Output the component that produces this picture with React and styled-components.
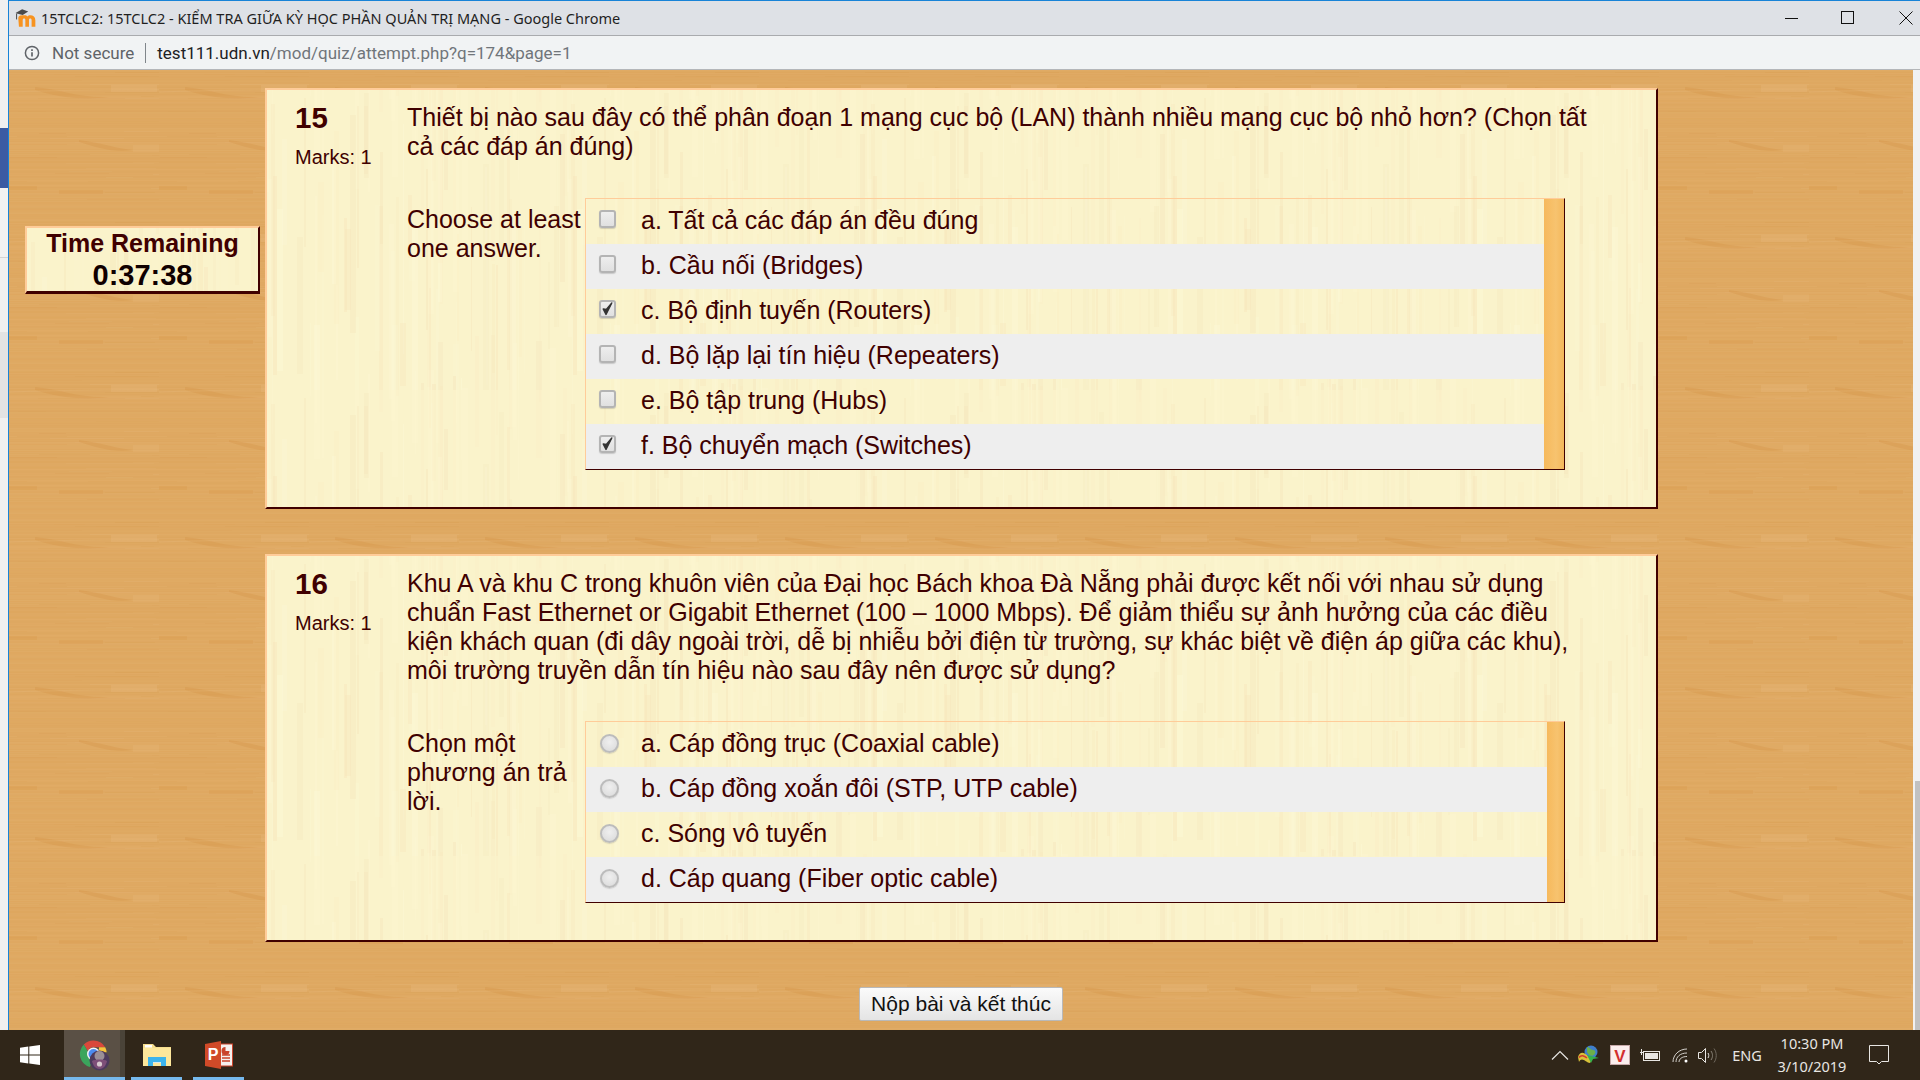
import React from "react";
import styled, { createGlobalStyle } from "styled-components";

function rng(seed) {
  let s = seed;
  return () => {
    s = (s * 9301 + 49297) % 233280;
    return s / 233280;
  };
}

function woodTile() {
  const r = rng(17);
  let out = `<rect width="150" height="150" fill="#dfa962"/>`;
  for (let y = 0; y < 150; y += 1) {
    const o = r() * 0.1;
    const light = r() > 0.5;
    out += `<rect x="0" y="${y}" width="150" height="1" fill="${light ? "#e9c088" : "#d39444"}" opacity="${o.toFixed(3)}"/>`;
  }
  for (let i = 0; i < 34; i += 1) {
    const x = Math.floor(r() * 150);
    const y = Math.floor(r() * 150);
    const w = 25 + Math.floor(r() * 70);
    const light = r() > 0.5;
    out += `<rect x="${x}" y="${y}" width="${w}" height="1" fill="${light ? "#e9c088" : "#d39444"}" opacity="${(0.06 + r() * 0.1).toFixed(3)}"/>`;
  }
  out += `<rect x="0" y="116" width="28" height="4" fill="#d4923f" opacity=".22"/>`;
  out += `<rect x="50" y="120" width="44" height="4" fill="#d4923f" opacity=".22"/>`;
  out += `<path d="M26 17 C50 19 70 28 100 27 C70 31 45 26 26 20Z" fill="#d39444" opacity=".32"/>`;
  out += `<rect x="102" y="15" width="46" height="7" fill="#e8bb80" opacity=".28"/>`;
  out += `<path d="M0 22 C30 21 110 19 150 20" stroke="#e8bb80" stroke-width="1" fill="none" opacity=".25"/>`;
  out += `<path d="M70 70 C90 72 105 78 124 80 C104 83 90 78 70 72Z" fill="#d39444" opacity=".32"/>`;
  out += `<rect x="124" y="75" width="26" height="7" fill="#e8bb80" opacity=".22"/>`;
  return `url("data:image/svg+xml,${encodeURIComponent(`<svg xmlns="http://www.w3.org/2000/svg" width="150" height="150">${out}</svg>`)}")`;
}

function paperTile() {
  const r = rng(53);
  let out = `<rect width="300" height="300" fill="#faf3cb"/>`;
  for (let i = 0; i < 80; i += 1) {
    const x = Math.floor(r() * 300);
    const y = Math.floor(r() * 300);
    const w = 1 + Math.floor(r() * 6);
    const h = 60 + Math.floor(r() * 190);
    const tone = r() > 0.5 ? "#f5e3b8" : "#fcf8d8";
    out += `<rect x="${x}" y="${y}" width="${w}" height="${h}" fill="${tone}" opacity="${(0.15 + r() * 0.25).toFixed(2)}"/>`;
    out += `<rect x="${x}" y="${y - 300}" width="${w}" height="${h}" fill="${tone}" opacity="0.15"/>`;
  }
  return `url("data:image/svg+xml,${encodeURIComponent(`<svg xmlns="http://www.w3.org/2000/svg" width="300" height="300">${out}</svg>`)}")`;
}

const WOOD = woodTile();
const PAPER = paperTile();

const Global = createGlobalStyle`
  html, body { margin: 0; padding: 0; height: 100%; overflow: hidden; }
  body { font-family: "Liberation Sans", Arial, sans-serif; background: #302619; }
  #root { width: 1920px; height: 1080px; }
`;

const Desktop = styled.div`
  width: 1920px;
  height: 1080px;
  display: flex;
  flex-direction: column;
`;
const Screen = styled.div`
  flex: 1;
  min-height: 0;
  display: flex;
`;
const BackWindow = styled.div`
  width: 8px;
  display: flex;
  flex-direction: column;
  background: #f0f0f0;
`;
const BackBand = styled.div`
  height: ${(p) => p.$h}px;
  background: ${(p) => p.$c};
  border-bottom: ${(p) => (p.$line ? "1px solid #d4d4d4" : "none")};
  box-sizing: border-box;
`;
const Browser = styled.div`
  flex: 1;
  min-width: 0;
  display: flex;
  flex-direction: column;
  border-left: 1px solid #1883d7;
  border-top: 1px solid #1883d7;
`;
const TitleBar = styled.div`
  height: 34px;
  background: #dee1e6;
  border-bottom: 1px solid #a9abae;
  display: flex;
  align-items: center;
  padding-left: 6px;
  color: #1f1f1f;
  font-family: "Noto Sans", sans-serif;
  font-size: 14.5px;
`;
const TitleText = styled.span`
  flex: 1;
  margin-left: 4px;
  white-space: nowrap;
`;
const WinButton = styled.span`
  width: ${(p) => p.$w}px;
  display: flex;
  justify-content: flex-start;
  align-items: center;
`;
const WinControls = styled.div`
  display: flex;
  width: 135px;
`;
const AddressBar = styled.div`
  height: 33px;
  background: #f1f3f4;
  border-bottom: 1px solid #b4b6b9;
  display: flex;
  align-items: center;
  padding-left: 15px;
  font-family: Roboto, sans-serif;
  font-size: 17px;
  white-space: nowrap;
`;
const NotSecure = styled.span`
  margin-left: 12px;
  color: #5f6368;
`;
const Separator = styled.span`
  width: 1px;
  height: 20px;
  background: #80868b;
  margin: 0 11px;
`;
const UrlHost = styled.span`
  color: #202124;
`;
const UrlPath = styled.span`
  color: #70757a;
`;
const Viewport = styled.div`
  flex: 1;
  min-height: 0;
  display: flex;
`;
const Wood = styled.main`
  flex: 1;
  min-width: 0;
  background-color: #dfa962;
  background-image: ${WOOD};
  padding-top: 18px;
  display: grid;
  grid-template-columns: 256px 1393px 1fr;
  grid-template-rows: auto auto;
  align-content: start;
  color: #400000;
`;
const Scrollbar = styled.div`
  width: 7px;
  background: #f1f1f1;
  display: flex;
  flex-direction: column;
  align-items: flex-end;
  justify-content: flex-end;
`;
const ScrollThumb = styled.div`
  width: 5px;
  height: 249px;
  background: #c1c1c1;
`;
const Sidebar = styled.aside`
  padding: 138px 0 0 16px;
`;
const TimeBox = styled.div`
  width: 235px;
  height: 68px;
  box-sizing: border-box;
  background-color: #faf3cb;
  background-image: ${PAPER};
  border-style: solid;
  border-width: 2px 2px 3px 2px;
  border-color: #ffcc99 #400000 #400000 #ffcc99;
  text-align: center;
  font-weight: bold;
  color: #400000;
  display: flex;
  flex-direction: column;
  justify-content: center;
`;
const TimeLabel = styled.div`
  font-size: 25px;
  line-height: 32px;
`;
const TimeValue = styled.div`
  font-size: 29px;
  line-height: 33px;
  color: #100000;
`;
const Questions = styled.div`
  display: flex;
  flex-direction: column;
  gap: 45px;
`;
const Card = styled.section`
  box-sizing: border-box;
  display: flex;
  background-color: #faf3cb;
  background-image: ${PAPER};
  border-style: solid;
  border-width: 2px;
  border-color: #ffcc99 #400000 #400000 #ffcc99;
  padding: 12px 56px 37px 28px;
`;
const Info = styled.div`
  width: 112px;
  flex: none;
`;
const QNumber = styled.div`
  font-size: 29.5px;
  font-weight: bold;
  line-height: 32px;
`;
const Marks = styled.div`
  font-size: 20px;
  line-height: 24px;
  margin-top: 11px;
`;
const Body = styled.div`
  flex: 1;
  min-width: 0;
`;
const QText = styled.div`
  font-size: 25px;
  line-height: 29px;
  padding-top: 1px;
  margin-bottom: ${(p) => p.$gap}px;
`;
const AnswerArea = styled.div`
  display: flex;
`;
const Prompt = styled.div`
  width: 178px;
  flex: none;
  box-sizing: border-box;
  padding: ${(p) => p.$top}px 2px 0 0;
  font-size: 25px;
  line-height: 29px;
`;
const AnswerBox = styled.div`
  width: 980px;
  box-sizing: border-box;
  display: flex;
  border-style: solid;
  border-width: 1px;
  border-color: #ffcc99 #400000 #400000 #ffcc99;
`;
const AnswerList = styled.div`
  flex: 1;
`;
const AnswerBar = styled.div`
  width: ${(p) => p.$w}px;
  background: linear-gradient(90deg, #f6b95c, #f7c36f 60%, #f4b75a);
`;
const Row = styled.label`
  height: 45px;
  box-sizing: border-box;
  display: flex;
  align-items: center;
  padding: 0 0 2px 13px;
  font-size: 25px;
  background: ${(p) => (p.$shade ? "#eeeeee" : "transparent")};
`;
const ControlSlot = styled.span`
  width: 42px;
  flex: none;
  display: flex;
`;
const Check = styled.span`
  width: 17px;
  height: 18px;
  margin-bottom: 4px;
  box-sizing: border-box;
  border-radius: 3px;
  border: 2px solid #b4b4b4;
  background: linear-gradient(#eeeeee, #e0e0e0);
  box-shadow: 0 1px 1px rgba(120, 120, 120, 0.3);
  display: flex;
  align-items: center;
  justify-content: center;
`;
const Radio = styled.span`
  width: 19px;
  height: 19px;
  margin-left: 1px;
  box-sizing: border-box;
  border-radius: 50%;
  border: 2px solid #bcbcbc;
  background: radial-gradient(circle at 50% 40%, #efefef, #d9d9d9);
  box-shadow: 0 1px 1px rgba(120, 120, 120, 0.25);
`;
const Footer = styled.div`
  grid-column: 1 / -1;
  display: flex;
  justify-content: center;
  padding-top: 45px;
`;
const SubmitButton = styled.button`
  width: 204px;
  height: 34px;
  box-sizing: border-box;
  padding: 0;
  border: 1px solid #b9b9b9;
  border-radius: 2px;
  background: linear-gradient(#fbfbfb, #e4e4e4);
  font-family: "Liberation Sans", Arial, sans-serif;
  font-size: 21px;
  color: #111;
`;
const Taskbar = styled.footer`
  height: 50px;
  background: #302619;
  display: flex;
  color: #e8e6e3;
`;
const StartButton = styled.div`
  width: 64px;
  display: flex;
  align-items: center;
  justify-content: center;
  padding-right: 4px;
  box-sizing: border-box;
`;
const TaskItem = styled.div`
  width: ${(p) => p.$w}px;
  margin-right: ${(p) => p.$gap || 0}px;
  box-sizing: border-box;
  display: flex;
  align-items: center;
  justify-content: center;
  border-bottom: 3px solid #76b9ed;
  padding-top: 3px;
  background: ${(p) =>
    p.$active
      ? "linear-gradient(90deg, #5a5045 0, #5a5045 56px, #4a4338 56px, #4a4338 100%)"
      : "transparent"};
`;
const Tray = styled.div`
  margin-left: auto;
  display: flex;
  align-items: center;
  padding-right: 31px;
`;
const TraySlot = styled.span`
  width: ${(p) => p.$w}px;
  display: flex;
  justify-content: center;
`;
const TrayText = styled.span`
  width: 44px;
  font-family: "Noto Sans", sans-serif;
  font-size: 14.5px;
  text-align: center;
`;
const Clock = styled.div`
  width: 86px;
  text-align: center;
  font-family: "Noto Sans", sans-serif;
  font-size: 14.5px;
  line-height: 23px;
  white-space: nowrap;
`;
const NotifySlot = styled.span`
  margin-left: 14px;
  display: flex;
`;

const Moodle = () => (
  <svg width="22" height="20" viewBox="0 0 20 18">
    <path d="M3 9.5C3 7 5 6.5 7 6.5h1.8c1.2 0 2 .5 2.5 1.2.6-.8 1.5-1.2 2.6-1.2 2.7 0 4.6 1.5 4.6 4.5V17h-3.4v-5.8c0-1.3-.4-1.8-1.2-1.8-.9 0-1.2.6-1.2 1.8V17H9.4v-5.8c0-1.3-.3-1.8-1.1-1.8-.9 0-1.3.6-1.3 1.8V17H3.6z" fill="#f79320" />
    <path d="M0.5 4.5 6.5 1 12 3.2 7 6.3 3.5 5.3 1.6 5z" fill="#4a4a4a" />
    <path d="M1.4 5v5.3" stroke="#555" strokeWidth="1" />
  </svg>
);
const InfoIcon = () => (
  <svg width="16" height="16" viewBox="0 0 16 16" fill="none" stroke="#5f6368">
    <circle cx="8" cy="8" r="6.6" strokeWidth="1.5" />
    <path d="M8 7.2v4.4" strokeWidth="1.7" />
    <path d="M8 4.3v1.7" strokeWidth="1.7" />
  </svg>
);
const Minimize = () => (
  <svg width="14" height="14" viewBox="0 0 14 14"><path d="M0 7.5h13" stroke="#111" /></svg>
);
const Maximize = () => (
  <svg width="14" height="14" viewBox="0 0 14 14"><rect x=".5" y=".5" width="12" height="12" fill="none" stroke="#111" /></svg>
);
const CloseIcon = () => (
  <svg width="14" height="14" viewBox="0 0 14 14"><path d="M.5.5l13 13M13.5.5l-13 13" stroke="#111" /></svg>
);
const Tick = () => (
  <svg width="13" height="14" viewBox="0 0 13 14">
    <path d="M2.2 7 5 12.500 10.800 1 5.300 7.500z" fill="#333" stroke="#333" strokeWidth="1.400" strokeLinejoin="round" />
  </svg>
);
const WinLogo = () => (
  <svg width="20" height="20" viewBox="0 0 20 20" fill="#fff">
    <path d="M0 2.8 8.3 1.6v7.8H0zM9.3 1.5 20 0v9.4H9.3zM0 10.4h8.3v8L0 17.2zM9.3 10.4H20V20L9.3 18.5z" />
  </svg>
);
const ChromeIcon = () => (
  <svg width="32" height="32" viewBox="0 0 32 32">
    <path d="M14.500 1.500a13.500 13.500 0 0 1 11.700 6.800h-11.700a6 6 0 0 0-5.600 3.900L4.800 5.500A13.500 13.500 0 0 1 14.500 1.500z" fill="#d9483b" />
    <path d="M26.200 8.300a13.500 13.500 0 0 1 1.400 5H20V8.300z" fill="#f5c43d" />
    <path d="M4.800 5.500l6 10.300a6 6 0 0 0 3.700 4.200l-3.700 8A13.500 13.500 0 0 1 4.800 5.500z" fill="#3ba55c" />
    <circle cx="14.500" cy="15" r="6.500" fill="#f4f4f4" />
    <circle cx="14.500" cy="15" r="5" fill="#4a8bf0" />
    <circle cx="20.500" cy="21.500" r="10" fill="#4c3a5c" />
    <circle cx="20.500" cy="17" r="5" fill="#9a8f96" />
    <path d="M13 22c3-2 12-2 15 0-1 5-4 8-7.500 8S14 27 13 22z" fill="#7d4f78" />
    <circle cx="20.500" cy="25" r="2.600" fill="#d7c8cd" />
  </svg>
);
const FolderIcon = () => (
  <svg width="28" height="24" viewBox="0 0 28 24">
    <path d="M0 1h10l3 3h15v19H0z" fill="#f6de8e" />
    <rect x="2" y="2" width="7" height="2.500" fill="#fff" />
    <path d="M0 5h28v18H0z" fill="#fde79b" />
    <path d="M5 23v-9h18v9h-5v-4h-8v4z" fill="#3db4ec" />
    <rect x="10" y="19" width="8" height="1" fill="#d8e8ee" />
  </svg>
);
const PptIcon = () => (
  <svg width="28" height="28" viewBox="0 0 28 28">
    <rect x="14" y="3" width="13.500" height="22" fill="#f5f0ee" stroke="#c9432a" strokeWidth="1" />
    <path d="M17 14h8M17 17h8M17 20h8" stroke="#c9432a" strokeWidth="1.400" />
    <path d="M20.500 6a4 4 0 1 0 4 4h-4z" fill="#c9432a" />
    <path d="M0 3 16 0v28L0 25z" fill="#d14a28" />
    <text x="8" y="19" textAnchor="middle" fontFamily="Liberation Sans, sans-serif" fontWeight="bold" fontSize="16" fill="#fff">P</text>
  </svg>
);
const Chevron = () => (
  <svg width="18" height="10" viewBox="0 0 18 10" fill="none" stroke="#e8e6e3" strokeWidth="1.200">
    <path d="M1 9.500 9 1.500l8 8" />
  </svg>
);
const IdmIcon = () => (
  <svg width="22" height="20" viewBox="0 0 22 20">
    <circle cx="13" cy="7" r="6.500" fill="#3f7ecb" />
    <path d="M9 2c3 0 3 3 6 3s3 3 1 5-6 0-7-3z" fill="#6bb04a" />
    <path d="M0 12c2-6 6-5 10-1 2 2 4 2 5 2l-3 5C8 18 4 11 1 17z" fill="#d8c13a" />
    <path d="M1 12.500c2-3 5-2 8 .5" stroke="#d33b2e" strokeWidth="1.500" fill="none" />
    <path d="M9 10l12 3-6 1-2 4z" fill="#35b24a" />
  </svg>
);
const VIcon = () => (
  <svg width="20" height="20" viewBox="0 0 20 20">
    <rect x=".5" y=".5" width="19" height="19" fill="#fbeeee" stroke="#c7a9a9" />
    <text x="10" y="16.500" textAnchor="middle" fontFamily="Liberation Sans, sans-serif" fontWeight="bold" fontSize="17" fill="#d32f2f">V</text>
  </svg>
);
const Battery = () => (
  <svg width="21" height="13" viewBox="0 0 21 13" fill="none" stroke="#e8e6e3">
    <rect x="3.500" y="2.500" width="16" height="9" />
    <rect x="5" y="4" width="13" height="6" fill="#e8e6e3" stroke="none" />
    <path d="M0 3.500h3M1.500 0v6" />
  </svg>
);
const Wifi = () => (
  <svg width="17" height="15" viewBox="0 0 17 15" fill="none" stroke="#d5d2cd">
    <path d="M1 14C1 7 7 1 15 1" />
    <path d="M4 14c0-5 4-9 11-9" />
    <path d="M7 14c0-3 3-5.500 8-5.500" />
    <circle cx="14" cy="13" r="1.500" fill="#fff" stroke="none" />
  </svg>
);
const Volume = () => (
  <svg width="20" height="17" viewBox="0 0 20 17" fill="none" stroke="#e8e6e3">
    <path d="M.5 5.500h3l4-4v14l-4-4h-3z" />
    <path d="M10 6c1 1.500 1 3.500 0 5" />
    <path d="M13 4c2 3 2 6 0 9" stroke="#8a8378" />
    <path d="M16 1.500c3 4 3 10 0 14" stroke="#6f685d" />
  </svg>
);
const Notify = () => (
  <svg width="20" height="21" viewBox="0 0 20 21" fill="none" stroke="#e8e6e3">
    <path d="M.5 .5h19v16h-7l-2.500 2.500L7.500 16.500h-7z" />
  </svg>
);

const questions = [
  {
    n: "15",
    text: "Thiết bị nào sau đây có thể phân đoạn 1 mạng cục bộ (LAN) thành nhiều mạng cục bộ nhỏ hơn? (Chọn tất cả các đáp án đúng)",
    prompt: "Choose at least one answer.",
    promptTop: 7,
    kind: "check",
    bar: 20,
    gap: 37,
    answers: [
      ["a. Tất cả các đáp án đều đúng", false],
      ["b. Cầu nối (Bridges)", false],
      ["c. Bộ định tuyến (Routers)", true],
      ["d. Bộ lặp lại tín hiệu (Repeaters)", false],
      ["e. Bộ tập trung (Hubs)", false],
      ["f. Bộ chuyển mạch (Switches)", true],
    ],
  },
  {
    n: "16",
    text: "Khu A và khu C trong khuôn viên của Đại học Bách khoa Đà Nẵng phải được kết nối với nhau sử dụng chuẩn Fast Ethernet or Gigabit Ethernet (100 – 1000 Mbps). Để giảm thiểu sự ảnh hưởng của các điều kiện khách quan (đi dây ngoài trời, dễ bị nhiễu bởi điện từ trường, sự khác biệt về điện áp giữa các khu), môi trường truyền dẫn tín hiệu nào sau đây nên được sử dụng?",
    prompt: "Chọn một phương án trả lời.",
    promptTop: 8,
    kind: "radio",
    bar: 17,
    gap: 36,
    answers: [
      ["a. Cáp đồng trục (Coaxial cable)", false],
      ["b. Cáp đồng xoắn đôi (STP, UTP cable)", false],
      ["c. Sóng vô tuyến", false],
      ["d. Cáp quang (Fiber optic cable)", false],
    ],
  },
];

export default function App() {
  return (
    <Desktop>
      <Global />
      <Screen>
        <BackWindow>
          <BackBand $h={128} $c="#f0f0f0" />
          <BackBand $h={60} $c="#3b5ba3" />
          <BackBand $h={70} $c="#f2f2f2" $line />
          <BackBand $h={74} $c="#f0f0f0" />
          <BackBand $h={86} $c="#e3e3e3" />
        </BackWindow>
        <Browser>
          <TitleBar>
            <Moodle />
            <TitleText>15TCLC2: 15TCLC2 - KIỂM TRA GIỮA KỲ HỌC PHẦN QUẢN TRỊ MẠNG - Google Chrome</TitleText>
            <WinControls>
              <WinButton $w={56}><Minimize /></WinButton>
              <WinButton $w={58}><Maximize /></WinButton>
              <WinButton $w={21}><CloseIcon /></WinButton>
            </WinControls>
          </TitleBar>
          <AddressBar>
            <InfoIcon />
            <NotSecure>Not secure</NotSecure>
            <Separator />
            <UrlHost>test111.udn.vn</UrlHost>
            <UrlPath>/mod/quiz/attempt.php?q=174&amp;page=1</UrlPath>
          </AddressBar>
          <Viewport>
            <Wood>
              <Sidebar>
                <TimeBox>
                  <TimeLabel>Time Remaining</TimeLabel>
                  <TimeValue>0:37:38</TimeValue>
                </TimeBox>
              </Sidebar>
              <Questions>
                {questions.map((q) => (
                  <Card key={q.n}>
                    <Info>
                      <QNumber>{q.n}</QNumber>
                      <Marks>Marks: 1</Marks>
                    </Info>
                    <Body>
                      <QText $gap={q.gap}>{q.text}</QText>
                      <AnswerArea>
                        <Prompt $top={q.promptTop}>{q.prompt}</Prompt>
                        <AnswerBox>
                          <AnswerList>
                            {q.answers.map(([label, on], i) => (
                              <Row key={label} $shade={i % 2 === 1}>
                                <ControlSlot>
                                  {q.kind === "check" ? <Check>{on && <Tick />}</Check> : <Radio />}
                                </ControlSlot>
                                {label}
                              </Row>
                            ))}
                          </AnswerList>
                          <AnswerBar $w={q.bar} />
                        </AnswerBox>
                      </AnswerArea>
                    </Body>
                  </Card>
                ))}
              </Questions>
              <Footer>
                <SubmitButton>Nộp bài và kết thúc</SubmitButton>
              </Footer>
            </Wood>
            <Scrollbar>
              <ScrollThumb />
            </Scrollbar>
          </Viewport>
        </Browser>
      </Screen>
      <Taskbar>
        <StartButton><WinLogo /></StartButton>
        <TaskItem $w={61} $gap={6} $active><ChromeIcon /></TaskItem>
        <TaskItem $w={51} $gap={11}><FolderIcon /></TaskItem>
        <TaskItem $w={51}><PptIcon /></TaskItem>
        <Tray>
          <TraySlot $w={18}><Chevron /></TraySlot>
          <TraySlot $w={40}><IdmIcon /></TraySlot>
          <TraySlot $w={22}><VIcon /></TraySlot>
          <TraySlot $w={38}><Battery /></TraySlot>
          <TraySlot $w={22}><Wifi /></TraySlot>
          <TraySlot $w={34}><Volume /></TraySlot>
          <TrayText>ENG</TrayText>
          <Clock>
            <div>10:30 PM</div>
            <div>3/10/2019</div>
          </Clock>
          <NotifySlot><Notify /></NotifySlot>
        </Tray>
      </Taskbar>
    </Desktop>
  );
}
